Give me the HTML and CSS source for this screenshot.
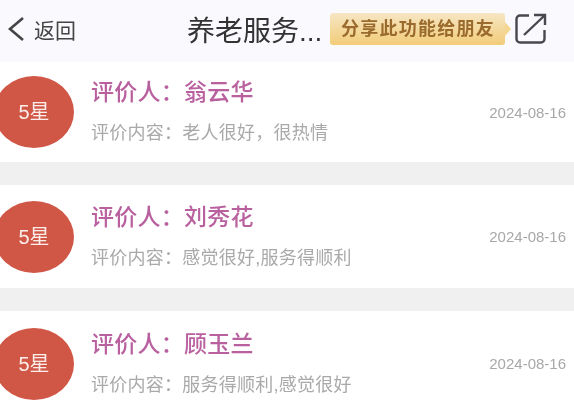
FILE: index.html
```html
<!DOCTYPE html>
<html lang="zh-CN">
<head>
<meta charset="utf-8">
<title>养老服务</title>
<link rel="stylesheet" href="styles.css">
</head>
<body>
<div class="page">
  <header class="bar">
    <div class="back">
      <svg class="chev" width="18" height="26" viewBox="0 0 18 26"><path d="M16 2 L3 13 L16 24" fill="none" stroke="#444" stroke-width="2.6"/></svg>
      <span>返回</span>
    </div>
    <div class="title">养老服务...</div>
    <div class="tip">分享此功能给朋友</div>
    <svg class="share" width="32" height="32" viewBox="0 0 32 32"><path d="M14 2.500 H5 a3.500 3.500 0 0 0 -3.500 3.500 V26 a3.500 3.500 0 0 0 3.500 3.500 H26 a3.500 3.500 0 0 0 3.500 -3.500 V17" fill="none" stroke="#48484f" stroke-width="2.400"/><path d="M9 22 L29 3 M19 2 H30 V12" fill="none" stroke="#48484f" stroke-width="2.400"/></svg>
  </header>
  <section class="row">
    <div class="badge">5星</div>
    <div class="body">
      <div class="name">评价人&#65306;翁云华</div>
      <div class="text">评价内容&#65306;老人很好&#65292;很热情</div>
    </div>
    <div class="date">2024-08-16</div>
  </section>
  <section class="row">
    <div class="badge">5星</div>
    <div class="body">
      <div class="name">评价人&#65306;刘秀花</div>
      <div class="text">评价内容&#65306;感觉很好,服务得顺利</div>
    </div>
    <div class="date">2024-08-16</div>
  </section>
  <section class="row">
    <div class="badge">5星</div>
    <div class="body">
      <div class="name">评价人&#65306;顾玉兰</div>
      <div class="text">评价内容&#65306;服务得顺利,感觉很好</div>
    </div>
    <div class="date">2024-08-16</div>
  </section>
</div>
</body>
</html>
```
FILE: styles.css
```css
html, body {
  margin: 0;
  padding: 0;
  height: 100%;
  overflow: hidden;
  background: #fff;
}
body {
  font-family: "Liberation Sans", "Noto Sans CJK SC", sans-serif;
}
.page {
  display: flex;
  flex-direction: column;
  gap: 23px;
  background: #f0f0f0;
  height: 412px;
  overflow: hidden;
  filter: blur(0.4px);
}
.bar {
  flex: none;
  height: 62px;
  margin-bottom: -23px;
  padding-bottom: 4px;
  background: #f9f9fe;
  display: flex;
  align-items: center;
  padding-left: 7px;
  box-sizing: border-box;
}
.back {
  display: flex;
  align-items: center;
  gap: 9px;
  width: 180px;
  font-size: 21px;
  color: #444;
}
.chev { flex: none; }
.title {
  width: 143px;
  font-size: 28px;
  color: #333;
  white-space: nowrap;
}
.tip {
  position: relative;
  width: 175px;
  height: 32px;
  box-sizing: border-box;
  padding-left: 11px;
  line-height: 32px;
  border-radius: 3px;
  background: linear-gradient(#f6e6c4, #f2cc78);
  color: #9a6b2c;
  font-size: 18px;
  font-weight: bold;
  letter-spacing: 1.250px;
  white-space: nowrap;
}
.tip::after {
  content: "";
  position: absolute;
  left: 100%;
  top: 9px;
  border-left: 6px solid #f4d68e;
  border-top: 7px solid transparent;
  border-bottom: 7px solid transparent;
}
.share {
  flex: none;
  margin-left: 10px;
}
.row {
  flex: none;
  height: 103px;
  background: #fff;
  display: flex;
  align-items: center;
  padding-right: 8px;
}
.row:nth-child(2) { height: 100px; }
.row:last-child { height: 105px; }
.badge {
  flex: none;
  width: 80px;
  height: 72px;
  margin-left: -6px;
  border-radius: 50%;
  background: #d05646;
  color: #fbeeea;
  font-size: 20px;
  line-height: 72px;
  text-align: center;
}
.body {
  flex: 1;
  margin-left: 17px;
  min-width: 0;
  padding-bottom: 2px;
}
.name {
  font-size: 23px;
  line-height: 30px;
  font-weight: 500;
  letter-spacing: 0.250px;
  color: #b9609f;
  margin-bottom: 14px;
}
.text {
  font-size: 18px;
  line-height: 24px;
  letter-spacing: 0.250px;
  color: #a9a9a9;
}
.date {
  flex: none;
  font-size: 15px;
  color: #a8a8a8;
}
```
